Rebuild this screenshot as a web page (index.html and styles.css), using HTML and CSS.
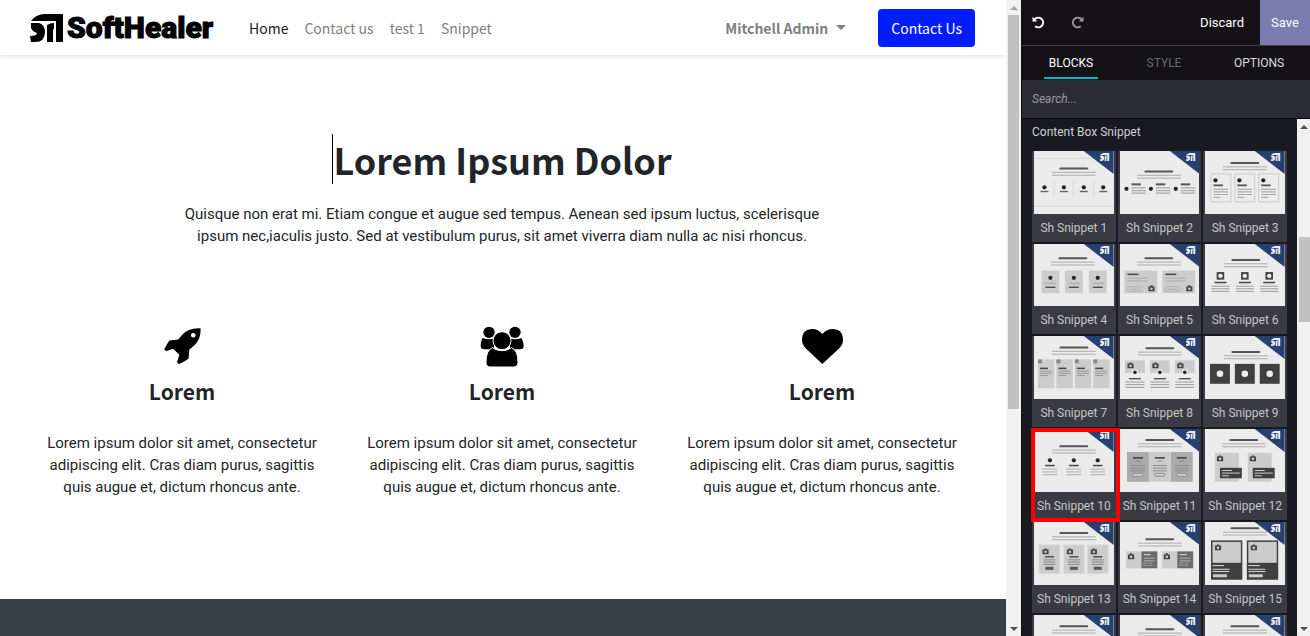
FILE: index.html
```html
<!DOCTYPE html>
<html lang="en">
<head>
    <meta charset="UTF-8">
    <meta name="viewport" content="width=device-width, initial-scale=1.0">
    <title>SoftHealer Website Editor</title>
    <link rel="stylesheet" href="styles.css">
</head>
<body>
    <svg class="defs" aria-hidden="true">
        <defs>
            <symbol id="mark" viewBox="0 0 34 28">
                <path d="M1 7Q5 1 14 0H33V28H26V7Z"/>
                <path d="M1 9H9Q15 11 15 18Q15 28 5 28H1L0 22Q7 22 7 19Q3 18 1 14Z"/>
                <path d="M17 11Q20 9 24 9V14Q23 15 23 18V28H17Z"/>
            </symbol>
            <g id="corner">
                <path fill="#27406f" d="M50 0H80V23Z"/>
                <use href="#mark" x="65" y="2" width="12" height="8" fill="#e8ecf4"/>
            </g>
            <g id="head">
                <rect x="-14.5" y="-1" width="29" height="2" rx="1" fill="#555"/>
                <path stroke="#aaa" d="M-22 3.9H22M-22 6.8H22"/>
            </g>
            <g id="camera" fill="#444">
                <path d="M0 1.2H1.6L2.2 0H4L4.6 1.2H6.2V6H0Z"/>
                <circle cx="3.1" cy="3.5" r="1.3" fill="#ccc"/>
            </g>
            <g id="u1"><circle r="2.1" fill="#222"/><path stroke="#666" stroke-width="1.4" d="M-4 4.2H4"/></g>
            <g id="u2"><circle r="2.1" fill="#222"/><path stroke="#555" stroke-width="2" d="M5-4.5H14.5"/><path stroke="#aaa" stroke-width="1.2" d="M5-1H19.5M5 1.7H19.5M5 4.4H19.5"/></g>
            <g id="u3"><rect x=".5" y=".5" width="20" height="28" fill="none" stroke="#ccc"/><circle cx="5" cy="7" r="2.1" fill="#222"/><path stroke="#555" stroke-width="1.8" d="M3 12H12.5"/><path stroke="#aaa" stroke-width="1.2" d="M3 16H17.5M3 18.6H17.5M3 21.2H17.5M3 24H10"/></g>
            <g id="u4"><rect width="18" height="23" rx="1" fill="#ccc"/><circle cx="9" cy="7.5" r="2.1" fill="#222"/><path stroke="#aaa" d="M2.5 13H15.5"/><path stroke="#444" stroke-width="1.3" d="M4 17H14"/></g>
            <g id="u5"><rect width="33" height="23" rx="1" fill="#ccc"/><path stroke="#444" stroke-width="1.5" d="M3 4H14"/><path stroke="#aaa" d="M3 7.8H23M3 10.6H23M6 19H15"/><rect x="3.5" y="16.5" width="14" height="4.5" fill="none" stroke="#aaa" stroke-width=".7"/><use href="#camera" x="24" y="15"/></g>
            <g id="u6"><rect x="-3.8" y="-3.8" width="7.6" height="7.6" fill="#444"/><circle r="2.2" fill="#eee"/><path stroke="#444" stroke-width="1.5" d="M-6 6.7H6"/><path stroke="#999" d="M-9 10.4H9M-9 13H9M-9 15.6H9"/></g>
            <g id="u7"><rect width="16.5" height="29" fill="#ccc"/><rect width="4" height="4" fill="#888"/><path stroke="#444" stroke-width="1.5" d="M2 9H10"/><path stroke="#999" d="M2 11.8H14M2 14H14M2 16.2H10"/></g>
            <g id="u8"><rect width="20" height="12.5" fill="#ccc"/><use href="#camera" x="2.5" y="2" /><circle cx="10" cy="12" r="3" fill="#eee"/><circle cx="10" cy="12" r="1.8" fill="#222"/><path stroke="#444" stroke-width="1.3" d="M4 18.4H16"/><path stroke="#999" d="M.5 21.7H19.5M.5 24.4H19.5M.5 27.1H19.5"/></g>
            <g id="u9"><rect width="20" height="20" fill="#404040"/><circle cx="10" cy="10" r="3.3" fill="#eee"/></g>
            <g id="u10"><circle r="2.1" fill="#222"/><path stroke="#444" stroke-width="1.5" d="M-4.8 5.2H4.8"/><path stroke="#aaa" d="M-7.5 8.8H7.5M-7.5 11.6H7.5M-7.5 14.4H7.5"/></g>
            <g id="u11"><path stroke="#444" stroke-width="1.6" d="M-5 6H5"/><path stroke="#888" d="M-2.5 9.3H2.5M-7 13.6H7M-7 16.3H7M-7 19H7"/><rect x="-5" y="21.5" width="10" height="3" rx="1" fill="#ccc" stroke="#777" stroke-width=".7"/></g>
            <g id="u12"><rect width="24" height="29" fill="#ccc"/><use href="#camera" x="2" y="2.5"/><rect x="5" y="15" width="22" height="10.5" fill="#404040"/><path stroke="#ccc" d="M7 17.7H17M7 20.3H25M7 23H14"/></g>
            <g id="u13"><rect width="21" height="29" fill="#ccc" stroke="#ddd"/><use href="#camera" x="3.5" y="3.5"/><path stroke="#444" stroke-width="1.4" d="M6 12H15"/><path stroke="#888" d="M4.5 15H16.5M4.5 17.3H16.5M4.5 19.6H16.5"/><rect x="6.5" y="22" width="8" height="3" fill="#555"/></g>
            <g id="u14"><rect width="15.5" height="17" fill="#ccc"/><rect x="15.5" width="16" height="17" fill="#6c6c6c"/><use href="#camera" x="2" y="2"/><path stroke="#ddd" d="M18 3.3H25"/><path stroke="#999" stroke-width="1.5" d="M18 7H29M18 9.3H29"/><rect x="18" y="11.7" width="8" height="2.5" fill="none" stroke="#aaa" stroke-width=".7"/></g>
            <g id="u15"><rect width="31.5" height="39.5" fill="#404040"/><rect x="1.5" y="1.5" width="28.5" height="21" fill="#ccc"/><use href="#camera" x="4" y="4"/><path stroke="#ddd" d="M1.5 25.3H13M1.5 29H18.5M1.5 31.3H18.5"/><rect x="2" y="34" width="14" height="3" fill="#ccc"/></g>
        </defs>
    </svg>

    <div class="site">
        <header class="navbar">
            <a href="#" class="brand">
                <svg width="34" height="28" aria-hidden="true"><use href="#mark"/></svg>
                <span>SoftHealer</span>
            </a>
            <nav class="menu">
                <a href="#" class="active">Home</a>
                <a href="#">Contact us</a>
                <a href="#">test 1</a>
                <a href="#">Snippet</a>
            </nav>
            <button type="button" class="user">Mitchell Admin<span class="caret"></span></button>
            <a href="#" class="btn-contact">Contact Us</a>
        </header>
        <main class="content">
            <h1>Lorem Ipsum Dolor</h1>
            <p class="lead">Quisque non erat mi. Etiam congue et augue sed tempus. Aenean sed ipsum luctus, scelerisque ipsum nec,iaculis justo. Sed at vestibulum purus, sit amet viverra diam nulla ac nisi rhoncus.</p>
            <div class="features">
                <section class="feature">
                    <div class="feature-icon">
                        <svg width="37" height="36" viewBox="71 59 111 109">
                            <path fill-rule="evenodd" d="M181 60Q183 91 164 110Q156 118 147 125L145 151Q134 160 118 167Q111 169 110 162L117 140L98 122L78 129Q71 129 72 122Q79 108 87 97L114 94Q128 73 146 65Q161 59 181 60ZM159 74a7 7 0 1 0 .1 0Z"/>
                        </svg>
                    </div>
                    <h2>Lorem</h2>
                    <p>Lorem ipsum dolor sit amet, consectetur adipiscing elit. Cras diam purus, sagittis quis augue et, dictum rhoncus ante.</p>
                </section>
                <section class="feature">
                    <div class="feature-icon">
                        <svg width="44" height="41" viewBox="18 48 132 123">
                            <circle cx="45" cy="67" r="17"/>
                            <circle cx="123" cy="67" r="17"/>
                            <path d="M27 84Q34 88 45 88Q54 88 60 85V118H30Q20 118 20 108Q20 91 27 84ZM141 84Q134 88 123 88Q114 88 108 85V118H138Q149 118 149 108Q148 91 141 84Z"/>
                            <path stroke="#fff" stroke-width="3" d="M55 113Q68 122 84 122Q100 122 113 113Q132 121 132 157Q132 171 118 171H50Q36 171 36 157Q36 121 55 113Z"/>
                            <circle cx="84" cy="92" r="27" stroke="#fff" stroke-width="3"/>
                        </svg>
                    </div>
                    <h2>Lorem</h2>
                    <p>Lorem ipsum dolor sit amet, consectetur adipiscing elit. Cras diam purus, sagittis quis augue et, dictum rhoncus ante.</p>
                </section>
                <section class="feature">
                    <div class="feature-icon">
                        <svg width="41" height="35" viewBox="123 57 123 105">
                            <path d="M184 162L134 115Q123 103 123 90Q123 57 155 57Q171 57 184 72Q198 57 214 57Q246 57 246 90Q246 103 235 115Z"/>
                        </svg>
                    </div>
                    <h2>Lorem</h2>
                    <p>Lorem ipsum dolor sit amet, consectetur adipiscing elit. Cras diam purus, sagittis quis augue et, dictum rhoncus ante.</p>
                </section>
            </div>
        </main>
        <footer class="site-footer"></footer>
    </div>

    <div class="scrollbar page-scroll">
        <span class="arrow up dim"></span>
        <div class="track"><div class="thumb"></div></div>
        <span class="arrow down"></span>
    </div>

    <aside class="editor">
        <div class="toolbar">
            <button type="button" class="tool" aria-label="Undo">
                <svg width="13" height="13" viewBox="0 0 13 13"><path d="M2.6 3.4A4.8 4.8 0 1 1 3.2 10.2" fill="none" stroke="currentColor" stroke-width="2"/><path d="M.5.8V5.5H5.2Z" fill="currentColor"/></svg>
            </button>
            <button type="button" class="tool redo" aria-label="Redo">
                <svg width="13" height="13" viewBox="0 0 13 13"><path d="M10.4 3.4A4.8 4.8 0 1 0 9.8 10.2" fill="none" stroke="currentColor" stroke-width="2"/><path d="M12.5.8V5.5H7.8Z" fill="currentColor"/></svg>
            </button>
            <button type="button" class="discard">Discard</button>
            <button type="button" class="save">Save</button>
        </div>
        <div class="tabs">
            <button type="button" class="active"><span>BLOCKS</span></button>
            <button type="button" disabled><span>STYLE</span></button>
            <button type="button"><span>OPTIONS</span></button>
        </div>
        <input type="search" class="search" placeholder="Search..." aria-label="Search blocks">
        <div class="panel">
            <div class="blocks">
                <h3>Content Box Snippet</h3>
                <div class="grid">
                    <div class="snippet">
                        <svg viewBox="0 0 80 63"><path stroke="#d8d8d8" d="M0 7.5H80M0 55.5H80M20 30V46M39.5 30V46M60 30V46"/><use href="#corner"/><use href="#head" x="40" y="17.5"/><use href="#u1" x="10.5" y="36.5"/><use href="#u1" x="30" y="36.5"/><use href="#u1" x="50" y="36.5"/><use href="#u1" x="69.5" y="36.5"/></svg>
                        <span>Sh Snippet 1</span>
                    </div>
                    <div class="snippet">
                        <svg viewBox="0 0 80 63"><use href="#corner"/><use href="#head" x="39" y="20.5"/><use href="#u2" x="6.5" y="38"/><use href="#u2" x="31" y="38"/><use href="#u2" x="56" y="38"/></svg>
                        <span>Sh Snippet 2</span>
                    </div>
                    <div class="snippet">
                        <svg viewBox="0 0 80 63"><use href="#corner"/><use href="#head" x="40" y="12"/><use href="#u3" x="5.5" y="22.5"/><use href="#u3" x="29.5" y="22.5"/><use href="#u3" x="53.5" y="22.5"/></svg>
                        <span>Sh Snippet 3</span>
                    </div>
                    <div class="snippet">
                        <svg viewBox="0 0 80 63"><use href="#corner"/><use href="#head" x="39" y="14.3"/><use href="#u4" x="7.5" y="26.5"/><use href="#u4" x="31" y="26.5"/><use href="#u4" x="55" y="26.5"/></svg>
                        <span>Sh Snippet 4</span>
                    </div>
                    <div class="snippet">
                        <svg viewBox="0 0 80 63"><use href="#corner"/><use href="#head" x="39" y="14.3"/><use href="#u5" x="4.5" y="26.5"/><use href="#u5" x="42.5" y="26.5"/></svg>
                        <span>Sh Snippet 5</span>
                    </div>
                    <div class="snippet">
                        <svg viewBox="0 0 80 63"><use href="#corner"/><use href="#head" x="41" y="16"/><use href="#u6" x="15.5" y="32"/><use href="#u6" x="40" y="32"/><use href="#u6" x="64.5" y="32"/></svg>
                        <span>Sh Snippet 6</span>
                    </div>
                    <div class="snippet">
                        <svg viewBox="0 0 80 63"><use href="#corner"/><use href="#head" x="40" y="11.5"/><use href="#u7" x="4" y="23.5"/><use href="#u7" x="22.5" y="23.5"/><use href="#u7" x="41" y="23.5"/><use href="#u7" x="59.5" y="23.5"/></svg>
                        <span>Sh Snippet 7</span>
                    </div>
                    <div class="snippet">
                        <svg viewBox="0 0 80 63"><use href="#corner"/><use href="#head" x="40" y="12.3"/><use href="#u8" x="5" y="24.5"/><use href="#u8" x="30" y="24.5"/><use href="#u8" x="55" y="24.5"/></svg>
                        <span>Sh Snippet 8</span>
                    </div>
                    <div class="snippet">
                        <svg viewBox="0 0 80 63"><use href="#corner"/><use href="#head" x="41" y="16"/><use href="#u9" x="5" y="28"/><use href="#u9" x="30" y="28"/><use href="#u9" x="55" y="28"/></svg>
                        <span>Sh Snippet 9</span>
                    </div>
                    <div class="snippet picked">
                        <svg viewBox="0 0 80 63"><use href="#corner"/><use href="#head" x="40" y="17.3"/><use href="#u10" x="16" y="31.5"/><use href="#u10" x="40" y="31.5"/><use href="#u10" x="64" y="31.5"/></svg>
                        <span>Sh Snippet 10</span>
                    </div>
                    <div class="snippet">
                        <svg viewBox="0 0 80 63"><use href="#corner"/><use href="#head" x="40" y="11"/><path fill="#aaa" d="M7 23H29V53H7ZM51 23H73V53H51Z"/><path fill="#ccc" d="M29 23H51V53H29Z"/><use href="#u11" x="18" y="23"/><use href="#u11" x="40" y="23"/><use href="#u11" x="62" y="23"/></svg>
                        <span>Sh Snippet 11</span>
                    </div>
                    <div class="snippet">
                        <svg viewBox="0 0 80 63"><use href="#corner"/><use href="#head" x="39" y="11"/><use href="#u12" x="10" y="24"/><use href="#u12" x="43" y="24"/></svg>
                        <span>Sh Snippet 12</span>
                    </div>
                    <div class="snippet">
                        <svg viewBox="0 0 80 63"><use href="#corner"/><use href="#head" x="40" y="11"/><use href="#u13" x="5" y="23"/><use href="#u13" x="29.5" y="23"/><use href="#u13" x="53.5" y="23"/></svg>
                        <span>Sh Snippet 13</span>
                    </div>
                    <div class="snippet">
                        <svg viewBox="0 0 80 63"><use href="#corner"/><use href="#head" x="40" y="17.3"/><use href="#u14" x="6" y="29.5"/><use href="#u14" x="42" y="29.5"/></svg>
                        <span>Sh Snippet 14</span>
                    </div>
                    <div class="snippet">
                        <svg viewBox="0 0 80 63"><use href="#corner"/><use href="#head" x="40" y="6.3"/><use href="#u15" x="6" y="18.5"/><use href="#u15" x="42" y="18.5"/></svg>
                        <span>Sh Snippet 15</span>
                    </div>
                    <div class="snippet">
                        <svg viewBox="0 0 80 63"><use href="#corner"/><use href="#head" x="40" y="11.3"/></svg>
                    </div>
                    <div class="snippet">
                        <svg viewBox="0 0 80 63"><use href="#corner"/><use href="#head" x="40" y="14.3"/></svg>
                    </div>
                    <div class="snippet">
                        <svg viewBox="0 0 80 63"><use href="#corner"/><use href="#head" x="40" y="11.3"/></svg>
                    </div>
                </div>
            </div>
            <div class="scrollbar panel-scroll">
                <span class="arrow up"></span>
                <div class="track"><div class="thumb"></div></div>
                <span class="arrow down"></span>
            </div>
        </div>
    </aside>
</body>
</html>
```
FILE: styles.css
```css
*
{
    box-sizing:border-box;
}
body
{
    margin:0;
    height:100vh;
    overflow:hidden;
    display:grid;
    grid-template-columns:1fr 15px 289px;
    grid-template-rows:100vh;
    font-family:Roboto,"Liberation Sans",sans-serif;
    font-size:15px;
    line-height:22px;
    color:#212529;
    background-color:#fff;
}
h1,h2,h3,p
{
    margin:0;
}
a
{
    text-decoration:none;
}
button
{
    border:0;
    padding:0;
    background:none;
    color:inherit;
    font:inherit;
}
.defs
{
    position:absolute;
    width:0;
    height:0;
}

/* website */
.site
{
    display:flex;
    flex-direction:column;
    min-width:0;
}
.navbar
{
    display:flex;
    align-items:center;
    height:55px;
    padding:0 31px 0 30px;
    box-shadow:0 2px 4px rgba(0,0,0,0.1);
    font-family:"Noto Sans CJK SC",sans-serif;
    font-size:14px;
}
.brand
{
    display:flex;
    align-items:center;
    gap:3px;
    width:186px;
    color:#000;
    font-family:Roboto,sans-serif;
    font-weight:900;
    font-size:30px;
    line-height:36px;
    -webkit-text-stroke:1px #000;
}
.menu
{
    display:flex;
    gap:16px;
    margin-left:33px;
}
.menu a
{
    color:#808080;
}
.menu .active
{
    color:#1a1a1a;
}
.user
{
    display:flex;
    align-items:center;
    gap:8px;
    margin-left:auto;
    font-weight:bold;
    color:#808080;
}
.caret
{
    border:5px solid transparent;
    border-top-color:#808080;
    border-bottom:0;
}
.btn-contact
{
    margin-left:32px;
    padding:8px 13px;
    border-radius:4px;
    background-color:#001cff;
    color:#fff;
}
.content
{
    padding:79px 22px 101px 20px;
    text-align:center;
}
.content h1
{
    display:inline-block;
    border-left:1px solid #000;
    font-family:"Noto Sans CJK SC",sans-serif;
    font-size:36px;
    line-height:50px;
}
.lead
{
    max-width:640px;
    margin:19px auto 0;
}
.features
{
    display:grid;
    grid-template-columns:repeat(3,1fr);
    max-width:960px;
    margin:76px auto 0;
}
.feature
{
    padding:0 15px;
}
.feature-icon
{
    display:flex;
    align-items:center;
    justify-content:center;
    height:46px;
}
.feature h2
{
    margin:6px 0 25px;
    font-family:"Noto Sans CJK SC",sans-serif;
    font-size:21px;
    line-height:32px;
}
.site-footer
{
    flex:1;
    background-color:#373e46;
}

/* scrollbars */
.scrollbar
{
    display:flex;
    flex-direction:column;
    align-items:center;
    background-color:#f1f1f1;
}
.arrow
{
    margin:6px 0 5px;
    border:4px solid transparent;
}
.arrow.up
{
    border-top:0;
    border-bottom-color:#505050;
}
.arrow.down
{
    border-bottom:0;
    border-top-color:#505050;
}
.arrow.dim
{
    border-bottom-color:#a3a3a3;
}
.track
{
    flex:1;
    align-self:stretch;
    padding:0 2px;
}
.thumb
{
    background-color:#c1c1c1;
}
.page-scroll .thumb
{
    height:65%;
}
.panel-scroll
{
    width:13px;
}
.panel-scroll .track
{
    padding:103px 0 0 2px;
}
.panel-scroll .thumb
{
    height:85px;
}

/* editor */
.editor
{
    display:flex;
    flex-direction:column;
    min-height:0;
    border-left:1px solid #111;
    background-color:#191922;
    color:#fff;
    font-size:12px;
}
.toolbar
{
    display:flex;
    align-items:stretch;
    height:46px;
    border-bottom:1px solid #3e3e44;
    background-color:#141217;
    font-size:13px;
}
.tool
{
    width:38px;
    padding-left:10px;
    text-align:left;
}
.tool svg
{
    display:block;
}
.redo
{
    padding-left:11px;
    color:#999;
}
.discard
{
    margin-left:auto;
    padding:0 16px;
}
.save
{
    width:50px;
    background-color:#7c7bad;
}
.tabs
{
    display:grid;
    grid-template-columns:98px 88px 1fr;
    height:34px;
    background-color:#141217;
    color:#ddd;
}
.tabs span
{
    display:inline-block;
    height:32px;
    padding:5px 5px 0;
    border-bottom:2px solid transparent;
}
.tabs .active
{
    color:#fff;
}
.tabs .active span
{
    border-color:#00b8c8;
}
.tabs :disabled
{
    color:#6a6a6e;
}
.search
{
    width:100%;
    height:39px;
    padding:0 10px;
    border:0;
    border-bottom:1px solid #000;
    background-color:#2b2b33;
    color:#fff;
    font:italic 12px Roboto,sans-serif;
}
.search::placeholder
{
    color:#999;
}
.panel
{
    display:flex;
    flex:1;
    min-height:0;
}
.blocks
{
    flex:1;
    overflow:hidden;
    padding:2px 10px 0;
}
.blocks h3
{
    margin-bottom:8px;
    font-size:12px;
    font-weight:normal;
    color:#d0d0d0;
}
.grid
{
    display:grid;
    grid-template-columns:repeat(3,1fr);
    gap:2px;
}
.snippet
{
    position:relative;
    padding:0 2px;
    background-color:#3a3a42;
    color:#c6c6c6;
    text-align:center;
}
.snippet svg
{
    display:block;
    width:100%;
    background-color:#ebebeb;
}
.snippet span
{
    display:block;
    line-height:28px;
    white-space:nowrap;
}
.picked::after
{
    content:"";
    position:absolute;
    z-index:1;
    inset:-1px -4px -2px -1px;
    border:4px solid #f00;
}
```
